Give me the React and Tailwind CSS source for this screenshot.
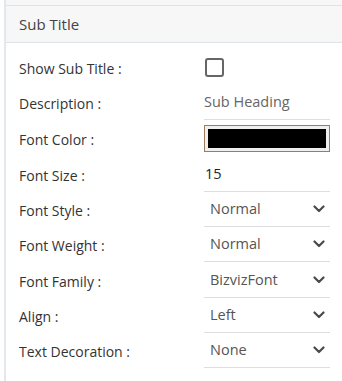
import React from "react";

const Chevron = () => (
  <svg width="12" height="8" viewBox="0 0 12 8" className="shrink-0">
    <path d="M1.5 1.5 L6 6 L10.5 1.5" fill="none" stroke="#4a4a4a" strokeWidth="2.2" strokeLinecap="round" strokeLinejoin="round" />
  </svg>
);

const Row = ({ label, children, h = "h-[35px]" }) => (
  <div className={`flex ${h}`}>
    <div className="w-[185px] shrink-0 flex items-center pt-[2px] text-[14px] text-[#333]">{label}</div>
    <div className="w-[126px] flex">{children}</div>
  </div>
);

const Select = ({ value }) => (
  <div className="flex-1 flex items-center justify-between pl-[6px] pr-[5px] border-b border-[#dedede] text-[14.5px] text-[#555]">
    <span>{value}</span>
    <Chevron />
  </div>
);

export default function App() {
  return (
    <div className="w-[342px] h-[381px] bg-white overflow-hidden" style={{ fontFamily: "'Open Sans', 'Noto Sans', sans-serif" }}>
      <div className="h-[5px] ml-[4px] bg-[#f7f7f7] border-l-2 border-[#e3e8ec]" />
      <div className="ml-[4px] border-l-2 border-[#e3e8ec] h-[376px]">
        <div className="h-[38px] bg-[#f7f7f7] border-y border-[#dde3e8] flex items-center pl-[13px] text-[15px] text-[#444]">
          Sub Title
        </div>
        <div className="pl-[13px] pt-[7px]">
          <Row label="Show Sub Title :">
            <div className="flex items-center pl-[1px]">
              <div className="w-[19px] h-[19px] border-2 border-[#666] rounded-[3px]" />
            </div>
          </Row>
          <Row label="Description :">
            <div className="flex-1 flex items-center border-b border-[#dedede] text-[14.5px] text-[#666]">Sub Heading</div>
          </Row>
          <Row label="Font Color :" h="h-[37px]">
            <div className="flex-1 flex items-center">
              <div className="w-full h-[27px] border border-[#9b7d5d] bg-[#efefef] p-[3px]">
                <div className="w-full h-full bg-black" />
              </div>
            </div>
          </Row>
          <Row label="Font Size :">
            <div className="flex-1 flex items-center border-b border-[#dedede] text-[14.5px] text-[#222] pl-[1px]">15</div>
          </Row>
          <Row label="Font Style :"><Select value="Normal" /></Row>
          <Row label="Font Weight :"><Select value="Normal" /></Row>
          <Row label="Font Family :" h="h-[36px]"><Select value="BizvizFont" /></Row>
          <Row label="Align :"><Select value="Left" /></Row>
          <Row label="Text Decoration :"><Select value="None" /></Row>
        </div>
      </div>
    </div>
  );
}
